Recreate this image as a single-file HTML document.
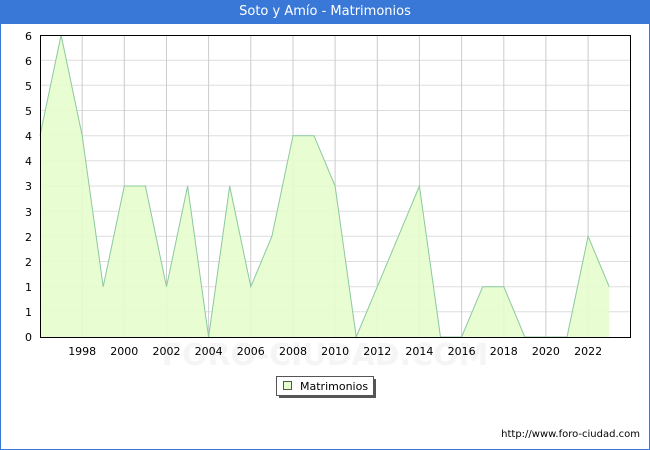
<!DOCTYPE html>
<html><head><style>
body{margin:0;width:650px;height:450px;overflow:hidden;font-family:"DejaVu Sans","Liberation Sans",sans-serif;}
.wrap{position:absolute;left:0;top:0;width:648px;height:448px;border:1px solid #3a78d8;background:#fff;}
.title{position:absolute;left:0;top:0;width:650px;height:24px;background:#3a78d8;color:#fff;font-size:13px;text-align:center;line-height:24px;}
</style></head><body>
<div class="wrap"></div>
<div class="title">Soto y Amío - Matrimonios</div>
<svg style="position:absolute;left:0;top:0" width="650" height="450" font-family="DejaVu Sans, Liberation Sans, sans-serif" font-size="11">
<g stroke="#ddd" stroke-width="1">
<line x1="40" x2="630" y1="60.2" y2="60.2"/><line x1="40" x2="630" y1="85.3" y2="85.3"/><line x1="40" x2="630" y1="110.5" y2="110.5"/><line x1="40" x2="630" y1="135.7" y2="135.7"/><line x1="40" x2="630" y1="160.8" y2="160.8"/><line x1="40" x2="630" y1="186" y2="186"/><line x1="40" x2="630" y1="211.2" y2="211.2"/><line x1="40" x2="630" y1="236.3" y2="236.3"/><line x1="40" x2="630" y1="261.5" y2="261.5"/><line x1="40" x2="630" y1="286.7" y2="286.7"/><line x1="40" x2="630" y1="311.8" y2="311.8"/>
</g>
<g stroke="#ccc"><line x1="82.2" x2="82.2" y1="35" y2="337"/><line x1="124.3" x2="124.3" y1="35" y2="337"/><line x1="166.5" x2="166.5" y1="35" y2="337"/><line x1="208.6" x2="208.6" y1="35" y2="337"/><line x1="250.8" x2="250.8" y1="35" y2="337"/><line x1="293" x2="293" y1="35" y2="337"/><line x1="335.1" x2="335.1" y1="35" y2="337"/><line x1="377.3" x2="377.3" y1="35" y2="337"/><line x1="419.4" x2="419.4" y1="35" y2="337"/><line x1="461.6" x2="461.6" y1="35" y2="337"/><line x1="503.8" x2="503.8" y1="35" y2="337"/><line x1="545.9" x2="545.9" y1="35" y2="337"/><line x1="588.1" x2="588.1" y1="35" y2="337"/></g>
<polygon fill="#e5fdcd" fill-opacity="0.9" stroke="none" points="40,337 40,135.7 61.1,35 82.2,135.7 103.2,286.7 124.3,186 145.4,186 166.5,286.7 187.6,186 208.6,337 229.7,186 250.8,286.7 271.9,236.3 293,135.7 314,135.7 335.1,186 356.2,337 377.3,286.7 398.4,236.3 419.4,186 440.5,337 461.6,337 482.7,286.7 503.8,286.7 524.8,337 545.9,337 567,337 588.1,236.3 609.2,286.7 609.2,337"/>
<polyline fill="none" stroke="#8cc8a0" stroke-width="1" points="40,135.7 61.1,35 82.2,135.7 103.2,286.7 124.3,186 145.4,186 166.5,286.7 187.6,186 208.6,337 229.7,186 250.8,286.7 271.9,236.3 293,135.7 314,135.7 335.1,186 356.2,337 377.3,286.7 398.4,236.3 419.4,186 440.5,337 461.6,337 482.7,286.7 503.8,286.7 524.8,337 545.9,337 567,337 588.1,236.3 609.2,286.7"/>
<text x="325" y="365" text-anchor="middle" font-size="30" fill="#000" fill-opacity="0.04" font-weight="bold">FORO-CIUDAD.COM</text>
<rect x="40.5" y="35.5" width="590" height="302" fill="none" stroke="#000"/>
<g text-anchor="end" fill="#000"><text x="32" y="40">6</text><text x="32" y="65">6</text><text x="32" y="90">5</text><text x="32" y="115">5</text><text x="32" y="140">4</text><text x="32" y="165">4</text><text x="32" y="190">3</text><text x="32" y="216">3</text><text x="32" y="241">2</text><text x="32" y="266">2</text><text x="32" y="291">1</text><text x="32" y="316">1</text><text x="32" y="341">0</text></g>
<g text-anchor="middle"><text x="82.2" y="355">1998</text><text x="124.3" y="355">2000</text><text x="166.5" y="355">2002</text><text x="208.6" y="355">2004</text><text x="250.8" y="355">2006</text><text x="293" y="355">2008</text><text x="335.1" y="355">2010</text><text x="377.3" y="355">2012</text><text x="419.4" y="355">2014</text><text x="461.6" y="355">2016</text><text x="503.8" y="355">2018</text><text x="545.9" y="355">2020</text><text x="588.1" y="355">2022</text></g>
<rect x="279" y="379" width="97" height="19" fill="#555"/>
<rect x="276.5" y="376.5" width="97" height="19" fill="#fff" stroke="#555"/>
<rect x="283.5" y="381.5" width="8" height="8" fill="#e5fdcd" stroke="#555"/>
<text x="300" y="390">Matrimonios</text>
<text x="640" y="437" text-anchor="end" font-size="10">http://www.foro-ciudad.com</text>
</svg>
</body></html>
